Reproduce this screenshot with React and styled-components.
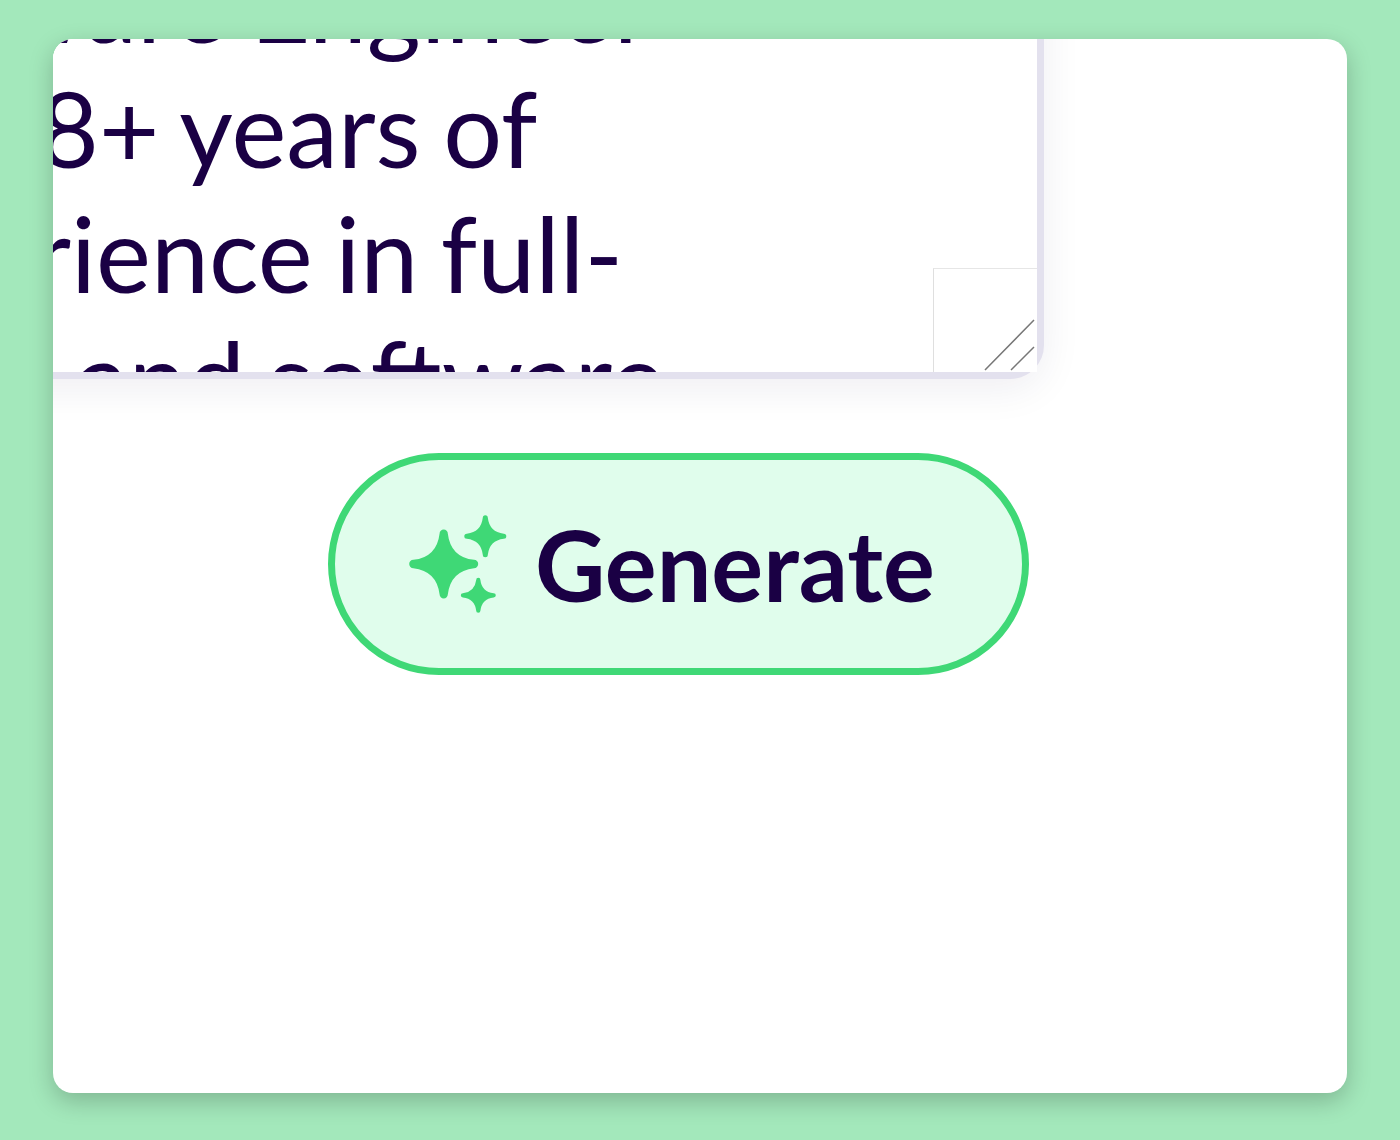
import React from "react";
import styled, { createGlobalStyle } from "styled-components";

const Global = createGlobalStyle`
  html, body { margin: 0; padding: 0; background: #a3e8bb; }
  body { font-family: "Lato", "Liberation Sans", sans-serif; }
`;

const Page = styled.div`
  height: 1140px;
  padding: 39px 53px 47px;
  box-sizing: border-box;
  background: #a3e8bb;
`;

const Card = styled.main`
  height: 1054px;
  background: #fff;
  border-radius: 20px;
  overflow: hidden;
  box-shadow: 0 8px 24px rgba(0, 0, 0, 0.22);
`;

const Editor = styled.div`
  position: relative;
  box-sizing: border-box;
  width: 1251px;
  height: 539px;
  margin: -199px 0 0 -260px;
  border: 7px solid #e3e1ee;
  border-radius: 34px;
  background: #fff;
  box-shadow: 0 10px 40px rgba(26, 0, 68, 0.07);
`;

const TextClip = styled.div`
  height: 100%;
  overflow: hidden;
  background: #fff;
`;

const Copy = styled.div`
  padding-top: 93px;
  font-size: 104px;
  line-height: 125px;
  word-spacing: -4px;
  font-weight: 400;
  color: #1a0044;
  white-space: nowrap;
`;

const Line = styled.div`
  padding-left: ${(p) => p.$indent}px;
`;

const Grip = styled.div`
  position: absolute;
  right: 0;
  bottom: 0;
  width: 104px;
  height: 104px;
  box-sizing: border-box;
  background: #fff;
  border-left: 1px solid #dfdfdf;
  border-top: 1px solid #e6e6e6;
  svg { display: block; }
`;

const GenerateButton = styled.button`
  display: flex;
  align-items: center;
  box-sizing: border-box;
  width: 701px;
  height: 222px;
  margin: 74px 0 0 275px;
  padding: 0 0 0 74px;
  gap: 28px;
  border: 7px solid #3fd876;
  border-radius: 111px;
  background: #e0fdec;
  color: #1a0044;
  font-family: inherit;
  font-size: 97px;
  font-weight: 700;
`;

const Label = styled.span`
  line-height: 1;
`;

const star = (cx, cy, r) => {
  const t = r * 0.12;
  const c = r * 0.2;
  const p = (x, y) => `${(cx + x).toFixed(2)} ${(cy + y).toFixed(2)}`;
  return [
    `M${p(-t, -r + t)}`,
    `A${t} ${t} 0 0 1 ${p(t, -r + t)}`,
    `Q${p(c, -c)} ${p(r - t, -t)}`,
    `A${t} ${t} 0 0 1 ${p(r - t, t)}`,
    `Q${p(c, c)} ${p(t, r - t)}`,
    `A${t} ${t} 0 0 1 ${p(-t, r - t)}`,
    `Q${p(-c, c)} ${p(-r + t, t)}`,
    `A${t} ${t} 0 0 1 ${p(-r + t, -t)}`,
    `Q${p(-c, -c)} ${p(-t, -r + t)}`,
    "Z",
  ].join(" ");
};

const Sparkles = () => (
  <svg width="98" height="98" viewBox="0 0 98 98" fill="#3fd876" aria-hidden="true">
    <path d={star(34.7, 49, 34.5)} />
    <path d={star(76.3, 21.3, 21)} />
    <path d={star(69.3, 80.3, 17.5)} />
  </svg>
);

const lines = [
  { text: "Software Engineer", indent: 19 },
  { text: "with 8+ years of", indent: 14 },
  { text: "experience in full-", indent: 14 },
  { text: "stack and software", indent: 18 },
];

export default function App() {
  return (
    <>
      <Global />
      <Page>
        <Card>
          <Editor>
            <TextClip>
              <Copy>
                {lines.map((l) => (
                  <Line key={l.text} $indent={l.indent}>
                    {l.text}
                  </Line>
                ))}
              </Copy>
            </TextClip>
            <Grip>
              <svg width="103" height="103" viewBox="0 0 103 103">
                <path d="M100 51L51 101M100 78L77 101" stroke="#777" strokeWidth="1.5" fill="none" />
              </svg>
            </Grip>
          </Editor>
          <GenerateButton type="button">
            <Sparkles />
            <Label>Generate</Label>
          </GenerateButton>
        </Card>
      </Page>
    </>
  );
}
